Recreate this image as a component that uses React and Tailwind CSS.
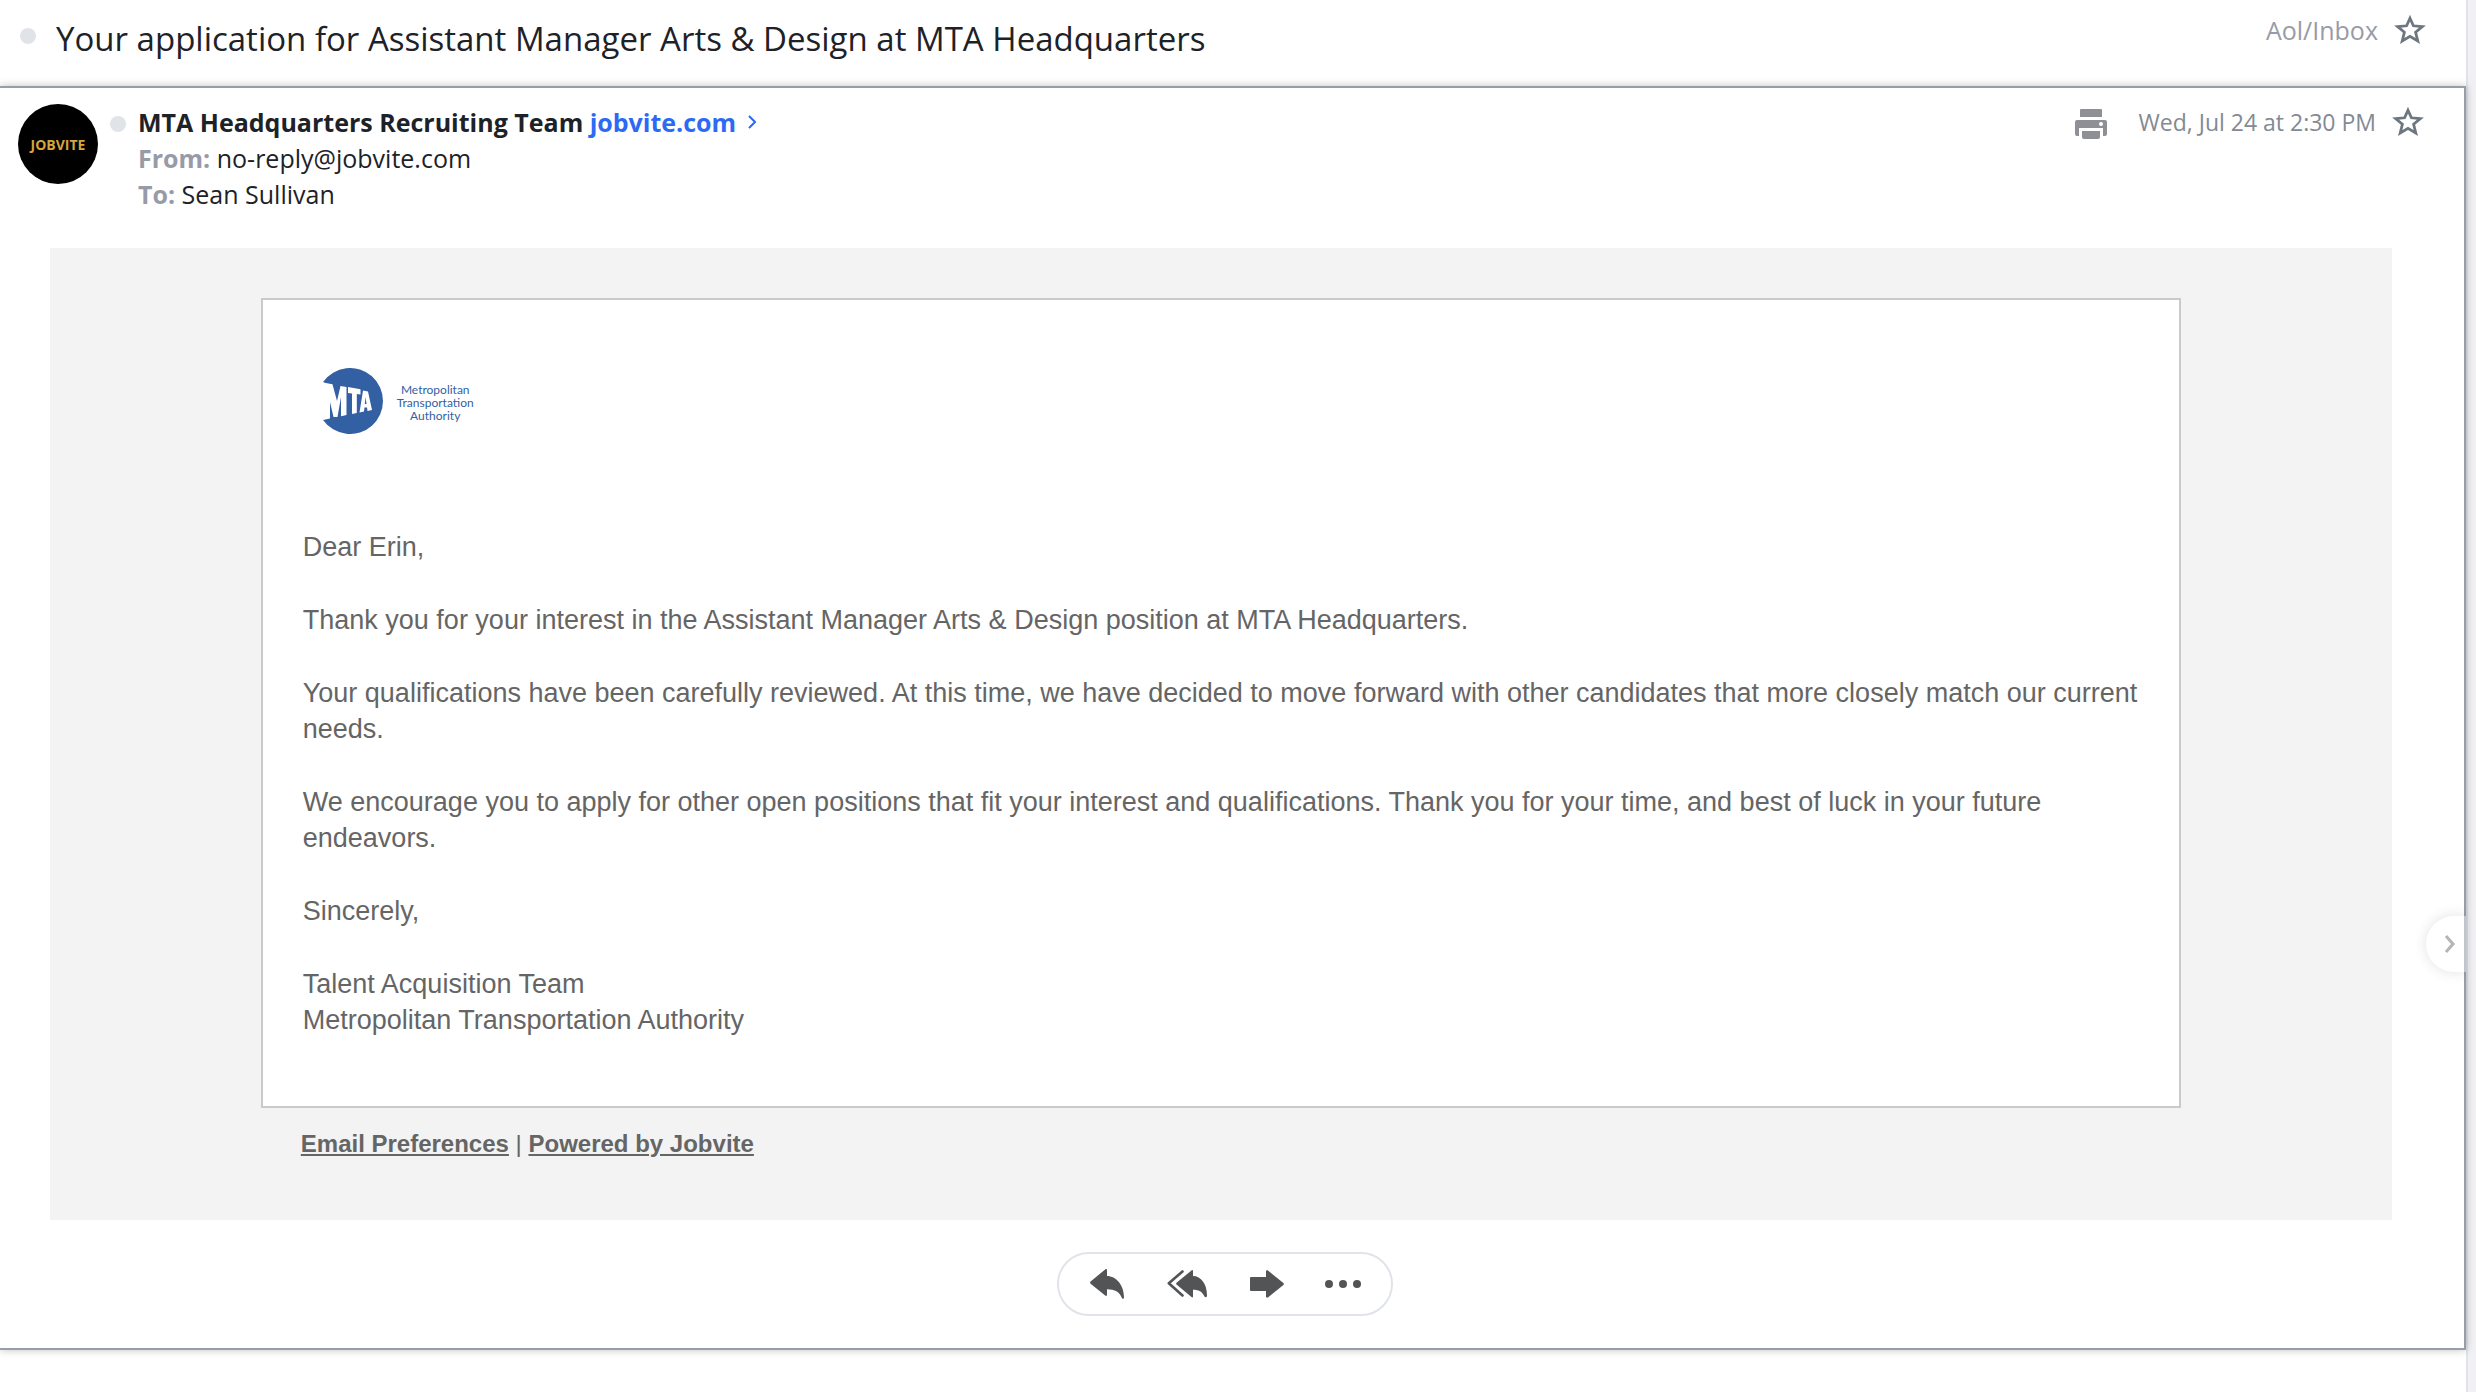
import React from 'react';

const paragraphs = [
  ['Dear Erin,'],
  ['Thank you for your interest in the Assistant Manager Arts & Design position at MTA Headquarters.'],
  ['Your qualifications have been carefully reviewed. At this time, we have decided to move forward with other candidates that more closely match our current needs.'],
  ['We encourage you to apply for other open positions that fit your interest and qualifications. Thank you for your time, and best of luck in your future endeavors.'],
  ['Sincerely,'],
  ['Talent Acquisition Team', 'Metropolitan Transportation Authority'],
];

function StarIcon() {
  return (
    <svg viewBox="0 0 32 32" className="w-8 h-8" fill="none" stroke="#6e7780" strokeWidth="2.8" strokeLinejoin="miter">
      <path d="M16 4.2 L19.4 11.8 L28.4 12.6 L21.6 18.3 L23.8 27 L16 22.3 L8.2 27 L10.4 18.3 L3.6 12.6 L12.6 11.8 Z" />
    </svg>
  );
}

function PrintIcon() {
  return (
    <svg viewBox="0 0 32 30" className="w-8 h-[30px]">
      <path fill="#8f9096" fillRule="evenodd" d="M6 0h20a1 1 0 0 1 1 1v7H5V1a1 1 0 0 1 1-1zM2 11h28a2 2 0 0 1 2 2v12a2 2 0 0 1-2 2h-2v-8H4v8H2a2 2 0 0 1-2-2V13a2 2 0 0 1 2-2zM26 13a2 2 0 1 0 0 4 2 2 0 0 0 0-4zM7 22h18v6a2 2 0 0 1-2 2H9a2 2 0 0 1-2-2z" />
    </svg>
  );
}

function ReplyIcon() {
  return (
    <svg viewBox="0 0 34 30" className="w-[34px] h-[30px]" fill="#535456">
      <path d="M15.2 .4C16.2 -.3 17 .2 17 1.3V7C26 7 34 16 34 28.5C34 30.2 32.2 30.2 31.8 28.8C29.5 22.8 25 20.5 17 20.3V25.8C17 27 16 27.3 15.2 26.6L.6 14.7Q-.4 13.6 .6 12.6Z" />
    </svg>
  );
}

function ReplyAllIcon() {
  return (
    <svg viewBox="0 0 40 28" className="w-10 h-7" fill="#535456">
      <path d="M24.5 .4C25.3 -.2 26 .2 26 1V6C34 6 40 14 40 25.5C40 27.7 38 27.8 37.2 26C35 21.5 32 19.8 26 19.7V26.5C26 27.5 25.3 27.7 24.5 27L9.5 14.4Q8.8 13.6 9.5 12.8Z" />
      <path d="M15.5 1.5L1.8 13.2L15.5 25.5" fill="none" stroke="#535456" strokeWidth="2.6" strokeLinecap="round" strokeLinejoin="round" />
    </svg>
  );
}

function ForwardIcon() {
  return (
    <svg viewBox="0 0 34 28" className="w-[34px] h-7" fill="#535456">
      <path d="M1 7H16V1.5C16 .3 17.2 0 18.2 .8L33.4 13Q34.3 14 33.4 15L18.2 27.2C17.2 28 16 27.7 16 26.5V21H1Q0 21 0 20V8Q0 7 1 7Z" />
    </svg>
  );
}

function MoreIcon() {
  return (
    <svg viewBox="0 0 36 8" className="w-9 h-2" fill="#535456">
      <circle cx="4" cy="4" r="4" />
      <circle cx="18" cy="4" r="4" />
      <circle cx="32" cy="4" r="4" />
    </svg>
  );
}

function MtaLogo() {
  return (
    <div className="flex items-center gap-[14px]">
      <svg viewBox="0 0 60 66" className="w-[60px] h-[66px]" role="img" aria-label="MTA">
        <path fill="#335fa3" d="M0 14A33 33 0 1 1 0 52L4 50V16Z" />
        <path fill="#fff" d="M0 14.5L9.5 16.3L14 33L17.5 18L23.5 19V47L18 48.2V29L14.5 49H10.5L7 34V50.5L0 52L3.5 46V28Z" />
        <path fill="#fff" d="M25 19L37.5 21.2V26.5L33.8 26V45L29 46V25.5L25 25Z" />
        <path fill="#fff" fillRule="evenodd" d="M40 22.5L45 23.5L49 42L44.5 43L44 39.5H41.5L41 43.5L36.5 44.5ZM42.5 29L41.8 36H43.5Z" />
      </svg>
      <p className="pt-0.5 font-['Lato',sans-serif] text-[12px] leading-[13px] text-center text-[#335fa3]">
        Metropolitan<br />Transportation<br />Authority
      </p>
    </div>
  );
}

export default function App() {
  return (
    <div className="flex min-h-screen bg-white font-['Open_Sans',sans-serif] text-[#1d2228]">
      <main className="relative flex-1 min-w-0">
        <header className="flex items-start justify-between h-[86px] pl-5 pr-6">
          <div className="flex items-start gap-5 pt-3">
            <span className="w-4 h-4 mt-4 rounded-full bg-[#e0e4e9]" />
            <h1 className="text-[33px] leading-[54px]">Your application for Assistant Manager Arts &amp; Design at MTA Headquarters</h1>
          </div>
          <div className="flex items-center gap-4 pt-3 pr-4 text-[25px] leading-9 text-[#979ba7]">
            <span>Aol/Inbox</span>
            <button aria-label="Star conversation"><StarIcon /></button>
          </div>
        </header>

        <article className="border-y-2 border-r-2 border-[#979ea8] shadow-[0_0_8px_rgba(0,0,0,0.25)] pb-8">
          <div className="flex items-start justify-between h-40 pt-4 pl-[18px] pr-10">
            <div className="flex items-start">
              <div className="flex items-center justify-center w-20 h-20 rounded-full bg-black text-[14px] font-bold text-[#d6a53c]">JOBVITE</div>
              <span className="w-4 h-4 mt-3 ml-3 rounded-full bg-[#e0e4e9]" />
              <div className="ml-3 text-[25px] leading-9">
                <h2 className="flex items-center font-bold">
                  MTA Headquarters Recruiting Team&nbsp;
                  <a href="#jobvite" className="flex items-center gap-3 text-[#2c69f5]">
                    jobvite.com
                    <svg viewBox="0 0 8 14" className="w-2 h-[14px]" fill="none" stroke="#2c69f5" strokeWidth="2"><path d="M1 1L7 7L1 13" /></svg>
                  </a>
                </h2>
                <p><span className="font-bold text-[#979ba7]">From:</span> no-reply@jobvite.com</p>
                <p><span className="font-bold text-[#979ba7]">To:</span> Sean Sullivan</p>
              </div>
            </div>
            <div className="flex items-center text-[23px] leading-9 text-[#828a93]">
              <button aria-label="Print" className="mr-8 pt-1"><PrintIcon /></button>
              <time className="mr-4">Wed, Jul 24 at 2:30 PM</time>
              <button aria-label="Star message"><StarIcon /></button>
            </div>
          </div>

          <section className="ml-[50px] mr-[72px] pt-[50px] pb-[58px] bg-[#f3f3f3] font-['Liberation_Sans',sans-serif] text-[#656565]">
            <div className="w-[82%] mx-auto px-10 py-[68px] bg-white border-2 border-[#cacaca]">
              <div className="pl-5"><MtaLogo /></div>
              <div className="mt-[95px] space-y-[37px] text-[27px] leading-9">
                {paragraphs.map((lines) => (
                  <p key={lines[0]}>
                    {lines.map((line) => (
                      <span key={line} className="block">{line}</span>
                    ))}
                  </p>
                ))}
              </div>
            </div>
            <footer className="w-[82%] mx-auto px-10 pt-[18px] text-[24px] leading-9">
              <a href="#preferences" className="font-bold underline">Email Preferences</a>
              {' | '}
              <a href="#powered" className="font-bold underline">Powered by Jobvite</a>
            </footer>
          </section>

          <div className="flex justify-center pt-8 pr-[14px]">
            <div className="flex items-center h-16 pl-[31px] pr-[30px] border-2 border-[#e0e4e9] rounded-full">
              <button aria-label="Reply" className="mr-[43px]"><ReplyIcon /></button>
              <button aria-label="Reply all" className="mr-[43px]"><ReplyAllIcon /></button>
              <button aria-label="Forward" className="mr-[41px]"><ForwardIcon /></button>
              <button aria-label="More"><MoreIcon /></button>
            </div>
          </div>
        </article>

        <button aria-label="Show sidebar" className="absolute right-0 top-[916px] flex items-center w-10 h-14 pl-[18px] rounded-l-full bg-white/40 shadow-[0_0_14px_rgba(0,0,0,0.12)] [clip-path:inset(-20px_0_-20px_-20px)]">
          <svg viewBox="0 0 12 20" className="w-3 h-5" fill="none" stroke="#b5b5b5" strokeWidth="3"><path d="M2 2L9 10L2 18" /></svg>
        </button>
      </main>
      <aside className="w-[10px] border-l-2 border-[#e0e4e9] bg-[#f1f1f5]" />
    </div>
  );
}
